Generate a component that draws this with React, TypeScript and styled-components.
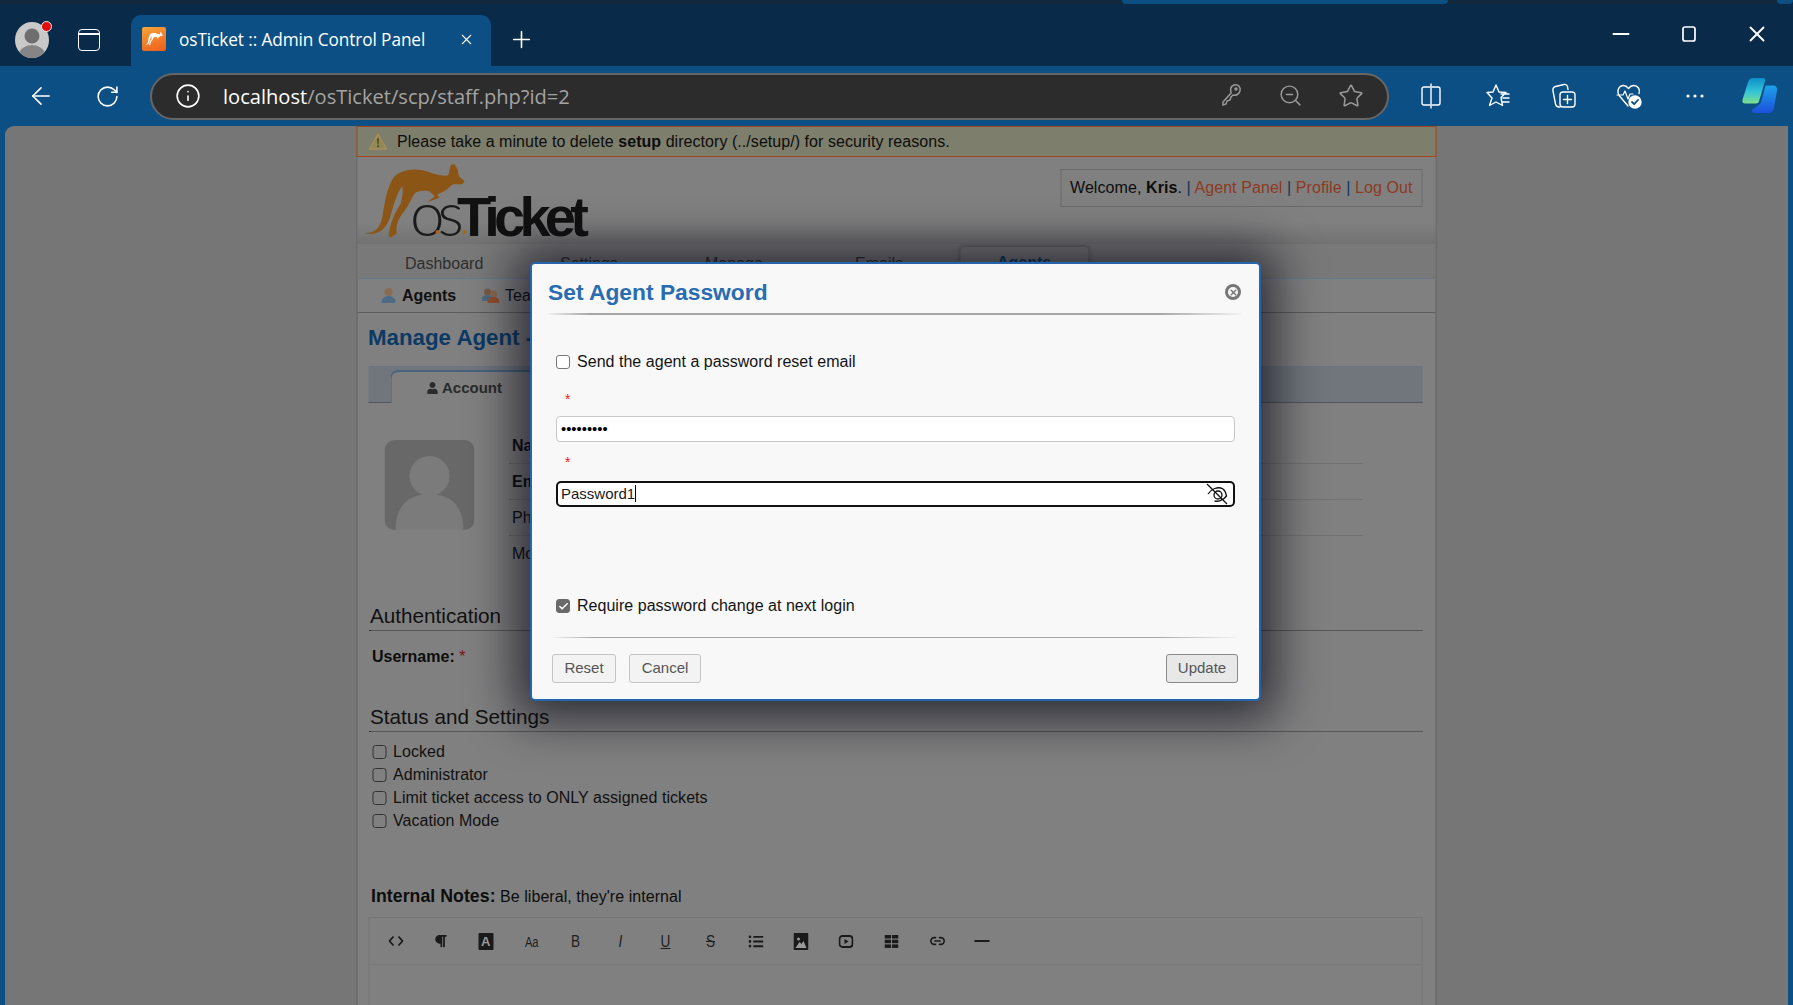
import * as React from 'react';
import styled, {createGlobalStyle} from 'styled-components';
import {ArrowLeft, Check, Info, Minus, Plus, RotateCw, Star, X, ZoomOut, Link2} from 'lucide-react';
import {FaListUl, FaParagraph, FaUser} from 'react-icons/fa';

const GlobalStyle = createGlobalStyle`
    html, body {
        margin: 0;
        padding: 0;
        height: 100%;
        overflow: hidden;
        background: #767676;
    }
    #root {
        height: 100%;
    }
    * {
        box-sizing: border-box;
    }
`;

const Browser = styled.div`
    display: flex;
    flex-direction: column;
    height: 1005px;
    font-family: 'Liberation Sans', Arial, sans-serif;
    color: #0d0d0d;
`;

const TabStrip = styled.div`
    height: 66px;
    background: #0a2a49;
    display: flex;
    flex-direction: column;
`;

const TopEdge = styled.div`
    height: 4px;
    background: #12283d;
    display: flex;
    justify-content: flex-end;
`;

const EdgeSegment = styled.div<{$w: number; $mr: number}>`
    width: ${(p) => p.$w}px;
    margin-right: ${(p) => p.$mr}px;
    background: #0c4f83;
    border-radius: 0 0 4px 4px;
`;

const TabRow = styled.div`
    flex: 1;
    display: flex;
    align-items: flex-end;
    padding-left: 15px;
`;

const Profile = styled.div`
    position: relative;
    width: 34px;
    height: 36px;
    margin-bottom: 8px;
    border-radius: 50%;
    background: #c9c9c9;
    overflow: hidden;
`;

const ProfileWrap = styled.div`
    position: relative;
    width: 34px;
    height: 44px;
`;

const RedDot = styled.span`
    position: absolute;
    right: -3px;
    top: -1px;
    width: 11px;
    height: 11px;
    border-radius: 50%;
    background: #e00b0b;
    border: 1px solid #f2f2f2;
`;

const SideIcon = styled.div`
    width: 22px;
    height: 22px;
    margin: 0 31px 15px 29px;
    border: 1.5px solid #fff;
    border-radius: 4px;
    background: linear-gradient(transparent 0 3.5px, #fff 3.5px 5px, transparent 5px);
`;

const ActiveTab = styled.div`
    width: 360px;
    height: 51px;
    background: #0c4f84;
    border-radius: 10px 10px 0 0;
    display: flex;
    align-items: center;
    padding: 0 16px 3px 11px;
    color: #fff;
    font-family: 'Open Sans', sans-serif;
    font-size: 17.25px;
`;

const Favicon = styled.div`
    width: 24px;
    height: 24px;
    border-radius: 2px;
    background: linear-gradient(160deg, #f4a53a, #ee5c1b);
    margin-right: 13px;
    display: flex;
    align-items: center;
    justify-content: center;
`;

const TabTitle = styled.span`
    flex: 1;
    white-space: nowrap;
    letter-spacing: -0.1px;
`;

const NewTab = styled.div`
    display: flex;
    color: #fff;
    margin: 0 0 13px 17px;
`;

const WindowButtons = styled.div`
    margin-left: auto;
    display: flex;
    gap: 42px;
    align-items: center;
    padding-right: 23px;
    height: 52px;
    margin-bottom: 6px;
    color: #fff;
`;

const Toolbar = styled.div`
    height: 60px;
    background: #0b4f84;
    display: flex;
    align-items: center;
    color: #fff;
    padding-left: 27px;
`;

const NavIcon = styled.div<{$mr: number}>`
    display: flex;
    margin-right: ${(p) => p.$mr}px;
`;

const AddressBar = styled.div`
    width: 1239px;
    height: 47px;
    border: 2px solid #666;
    border-radius: 24px;
    background: #2c2c2c;
    display: flex;
    align-items: center;
    padding: 0 23px 0 23px;
    font-family: 'Open Sans', sans-serif;
    font-size: 20.1px;
`;

const Host = styled.span`
    color: #fff;
    margin-left: 22px;
`;

const UrlPath = styled.span`
    color: #a3a3a3;
    flex: 1;
`;

const BarIcons = styled.div`
    display: flex;
    gap: 35px;
    color: #9a9a9a;
`;

const ToolIcons = styled.div`
    display: flex;
    align-items: center;
    margin-left: 29px;
    gap: 40px;
`;

const CopilotSlot = styled.div`
    display: flex;
    margin: -2px 0 0 -6px;
`;

const Viewport = styled.div`
    flex: 1;
    background: #0b4f84;
    padding: 0 5px;
    min-height: 0;
`;

const PageArea = styled.div`
    position: relative;
    height: 100%;
    background: #767676;
    border-top-left-radius: 9px;
    overflow: hidden;
`;

const Wrapper = styled.div`
    width: 1080px;
    margin: 0 auto;
    background: #808080;
    border-left: 1px solid #5f5f5f;
    border-right: 1px solid #5f5f5f;
    height: 100%;
    transform: translateX(-0.5px);
`;

const Notice = styled.div`
    height: 31px;
    margin: 0 -1px;
    background: #7d7e6b;
    border: 1px solid #a5471b;
    display: flex;
    align-items: center;
    padding-left: 11px;
    font-size: 16px;
    letter-spacing: 0.05px;
    gap: 10px;
`;

const Header = styled.div`
    position: relative;
    height: 87px;
    background: linear-gradient(#808080 75%, #727272);
`;

const LogoMark = styled.svg`
    position: absolute;
    left: 3px;
    top: 5px;
`;

const LogoWords = styled.div`
    position: absolute;
    left: 53px;
    top: 25px;
    display: flex;
    align-items: baseline;
    line-height: 60px;
    color: #111;
`;

const LogoThin = styled.span`
    font-family: Lato, sans-serif;
    font-weight: 300;
    font-size: 62px;
    letter-spacing: -7px;
    color: #1a1a1a;
`;

const LogoBold = styled.span`
    font-family: 'Liberation Sans', sans-serif;
    font-weight: 700;
    font-size: 56px;
    letter-spacing: -5.8px;
`;

const LogoDot = styled.span<{$x: number}>`
    position: absolute;
    left: ${(p) => p.$x}px;
    top: 73px;
    width: 4px;
    height: 4px;
    border-radius: 50%;
    background: #a8651c;
`;

const WelcomeBox = styled.div`
    position: absolute;
    right: 13px;
    top: 12px;
    height: 38px;
    width: 362px;
    padding-left: 9px;
    border: 1px solid #6b6b6b;
    display: flex;
    align-items: center;
    font-size: 16px;
    letter-spacing: 0.08px;
`;

const WelcomeText = styled.span`
    white-space: pre;
`;

const TopLink = styled.span`
    color: #8c3a22;
`;

const Separator = styled.span`
    color: #0d3558;
`;

const MainNav = styled.div`
    height: 35px;
    background: #797979;
    border-bottom: 1px solid #68788a;
    display: flex;
    padding-left: 48px;
    font-size: 16px;
    color: #2e2e2e;
`;

const MainNavItem = styled.div<{$w: number}>`
    width: ${(p) => p.$w}px;
    padding-top: 11px;
    white-space: nowrap;
`;

const ActiveNavItem = styled.div`
    width: 128px;
    height: 40px;
    margin: 3px 0 0 -37px;
    padding: 7px 0 0 37px;
    font-weight: 700;
    color: #0e3d66;
    background: #7a7a7a;
    border-radius: 4px 4px 0 0;
    box-shadow: 0 -1px 4px rgba(0, 0, 0, 0.3);
`;

const SubNav = styled.div`
    height: 34px;
    border-bottom: 1px solid #5c5c5c;
    display: flex;
    align-items: center;
    padding-left: 23px;
    font-size: 16px;
    color: #111;
`;

const SubNavItem = styled.div<{$bold?: boolean; $w: number}>`
    display: flex;
    align-items: center;
    gap: 6px;
    width: ${(p) => p.$w}px;
    font-weight: ${(p) => (p.$bold ? 700 : 400)};
`;

const Content = styled.div`
    padding: 0 13px 0 11px;
`;

const PageTitle = styled.h2`
    margin: 12px 0 0;
    font-size: 22.3px;
    line-height: 25px;
    font-weight: 700;
    color: #0c3a64;
    white-space: nowrap;
`;

const TabBar = styled.div`
    margin-top: 16px;
    height: 37px;
    background: #70767c;
    border-bottom: 1px solid #555;
    padding: 4px 0 0 22px;
`;

const AccountTab = styled.div`
    width: 300px;
    height: 33px;
    background: #808080;
    border-top: 2px solid #47627f;
    border-left: 1px solid #47627f;
    border-top-left-radius: 8px;
    display: flex;
    align-items: center;
    gap: 4px;
    padding-left: 35px;
    font-weight: 700;
    font-size: 15px;
    color: #2b2b2b;
`;

const ProfileSection = styled.div`
    margin-top: 25px;
    display: flex;
    padding-left: 16px;
    gap: 34px;
`;

const Avatar = styled.svg`
    display: block;
    margin-top: 12px;
    flex: none;
`;

const FieldList = styled.div`
    width: 854px;
`;

const FieldRow = styled.div<{$bold?: boolean; $last?: boolean}>`
    height: 36px;
    padding: 8px 0 0 4px;
    font-size: 16px;
    line-height: 19px;
    font-weight: ${(p) => (p.$bold ? 700 : 400)};
    border-bottom: ${(p) => (p.$last ? 'none' : '1px dotted #666')};
`;

const SectionHeading = styled.div<{$mt: number}>`
    margin-top: ${(p) => p.$mt}px;
    height: 27px;
    padding-left: 2px;
    font-size: 20.7px;
    line-height: 23px;
    color: #111;
    border-bottom: 1px dotted #2f2f2f;
`;

const UsernameRow = styled.div`
    margin: 14px 0 0 4px;
    height: 22px;
    line-height: 23px;
    font-size: 16px;
    font-weight: 700;
    white-space: pre;
`;

const Required = styled.span`
    color: #7c1414;
    font-weight: 400;
`;

const StatusList = styled.div`
    margin: 9px 0 0 4px;
`;

const StatusRow = styled.div`
    height: 22.8px;
    display: flex;
    align-items: center;
    gap: 7px;
    font-size: 16px;
    letter-spacing: 0.05px;
    color: #111;
`;

const Box = styled.span<{$checked?: boolean; $dim?: boolean}>`
    flex: none;
    width: 14px;
    height: 14px;
    border-radius: 3px;
    border: 1px solid ${(p) => (p.$dim ? '#333' : p.$checked ? '#6a6a6a' : '#777')};
    background: ${(p) => (p.$dim ? 'transparent' : p.$checked ? '#6a6a6a' : '#fff')};
    display: flex;
    align-items: center;
    justify-content: center;
    color: #fff;
`;

const NotesLine = styled.div`
    margin: 53px 0 0 3px;
    height: 22px;
    line-height: 22px;
    font-size: 16px;
    letter-spacing: 0.05px;
`;

const NotesLabel = styled.b`
    font-size: 17.7px;
`;

const Editor = styled.div`
    margin-top: 10px;
    height: 120px;
    border: 1px solid #757575;
`;

const EditorToolbar = styled.div`
    height: 47px;
    border-bottom: 1px solid #787878;
    display: flex;
    align-items: center;
    padding-left: 17px;
    color: #1a1a1a;
`;

const EditorButton = styled.div`
    width: 45.1px;
    flex: none;
    height: 22px;
    display: flex;
    align-items: center;
    justify-content: flex-start;
    padding-left: 2px;
`;

const EditorGlyph = styled.span<{$size?: number; $italic?: boolean; $under?: boolean; $strike?: boolean}>`
    display: block;
    width: 14px;
    padding-top: 2px;
    text-align: center;
    font-size: ${(p) => p.$size ?? 17}px;
    font-style: ${(p) => (p.$italic ? 'italic' : 'normal')};
    text-decoration: ${(p) => (p.$under ? 'underline' : p.$strike ? 'line-through' : 'none')};
    line-height: 16px;
    color: #1e1e1e;
    transform: scaleX(0.8);
`;

const InvertedA = styled.span`
    display: block;
    width: 15px;
    height: 17px;
    border-radius: 1px;
    background: #1a1a1a;
    color: #9a9a9a;
    text-align: center;
    font-size: 13px;
    font-weight: 700;
    line-height: 17px;
`;

const RuleGlyph = styled.span`
    display: block;
    width: 15px;
    height: 2px;
    background: #1a1a1a;
`;

const Modal = styled.div`
    position: absolute;
    left: 525px;
    top: 136px;
    width: 731px;
    height: 439px;
    background: #f8f8f8;
    border: 2px solid #2565ae;
    border-radius: 5px;
    box-shadow: 0 3px 48px 14px rgba(8, 8, 22, 0.72);
    display: flex;
    flex-direction: column;
    color: #141414;
`;

const ModalHeader = styled.div`
    height: 38px;
    margin: 9px 18px 2px 16px;
    display: flex;
    align-items: center;
    justify-content: space-between;
`;

const ModalTitle = styled.h3`
    margin: 0;
    font-size: 22.8px;
    font-weight: 700;
    color: #2a6cb0;
`;

const CloseDot = styled.div`
    width: 16px;
    height: 16px;
    border-radius: 50%;
    border: 3px solid #777;
    color: #777;
    display: flex;
    align-items: center;
    justify-content: center;
`;

const FadeRule = styled.div<{$h: number; $ml: number; $mr: number; $mt?: number}>`
    height: ${(p) => p.$h}px;
    margin: ${(p) => p.$mt ?? 0}px ${(p) => p.$mr}px 0 ${(p) => p.$ml}px;
    flex: none;
    background: linear-gradient(90deg, #f0f0f0, #a6a6a6 6%, #a6a6a6 88%, #f2f2f2);
`;

const ModalBody = styled.div`
    padding: 0 24px 0 24px;
`;

const CheckRow = styled.div<{$mt: number}>`
    margin-top: ${(p) => p.$mt}px;
    height: 20px;
    display: flex;
    align-items: center;
    gap: 7px;
    font-size: 16px;
    letter-spacing: 0.03px;
`;

const StarRow = styled.div<{$mt: number}>`
    margin-top: ${(p) => p.$mt}px;
    height: 16px;
    padding-left: 9px;
    color: #f01818;
    font-size: 14px;
    line-height: 18px;
`;

const PasswordInput = styled.input`
    display: block;
    width: 100%;
    height: 26px;
    margin-top: 10px;
    padding: 0 4px;
    border: 1px solid #c8c8c8;
    border-radius: 4px;
    background: #fff;
    color: #000;
    font-size: 14.8px;
    outline: none;
`;

const FocusedInput = styled.div`
    position: relative;
    height: 26px;
    margin-top: 12px;
    padding: 0 3px 2px;
    border: 2px solid #111;
    border-radius: 5px;
    background: #fff;
    display: flex;
    align-items: center;
    font-size: 15px;
    color: #1a1a1a;
`;

const Caret = styled.span`
    width: 1px;
    height: 17px;
    background: #000;
`;

const EyeButton = styled.svg`
    position: absolute;
    right: 4px;
    top: 0;
`;

const ModalFooter = styled.div`
    margin-top: 16px;
    padding: 0 21px 0 20px;
    display: flex;
    gap: 13px;
`;

const Button = styled.div<{$w: number; $primary?: boolean}>`
    width: ${(p) => p.$w}px;
    height: 29px;
    margin-left: ${(p) => (p.$primary ? 'auto' : '0')};
    padding-bottom: 2px;
    border: 1px solid ${(p) => (p.$primary ? '#8a8a8a' : '#c4c4c4')};
    border-radius: 3px;
    background: ${(p) => (p.$primary ? '#e8e8e8' : '#f3f3f3')};
    color: #555;
    font-size: 15px;
    display: flex;
    align-items: center;
    justify-content: center;
`;

function KangarooPath({color}: {color: string}) {
    return (
        <path
            fill={color}
            d="M12 213C40 215 58 200 65 165C72 125 78 75 100 45C120 23 165 15 205 30C225 38 245 43 263 40L270 10L280 5L290 20L295 43L312 58L305 67L278 67C265 75 255 90 230 97L236 107L200 121L222 103L205 87C190 85 175 87 165 91C150 110 150 125 125 155C110 175 105 195 108 215L88 227L84 220C88 185 100 155 120 125C125 105 128 90 125 73C110 90 100 125 90 160C80 200 50 225 12 213Z"
        />
    );
}

function KeyIcon() {
    return (
        <svg width="22" height="24" viewBox="0 0 22 24" fill="none" stroke="currentColor" strokeWidth="1.5">
            <path d="M13 2c4-1 7 2 6 6-1 3-4 5-7 4l-2 2-1 3-3 1-1 3-3 1v-3l8-9c-1-4 0-7 3-8z" />
            <circle cx="15" cy="6" r="1" />
        </svg>
    );
}

function ToolIcon({kind}: {kind: string}) {
    const common = {fill: 'none', stroke: '#fff', strokeWidth: 1.4, strokeLinejoin: 'round' as const, strokeLinecap: 'round' as const};
    return (
        <svg width="26" height="26" viewBox="0 0 26 26" {...common}>
            {kind === 'split' && (
                <>
                    <path d="M12 4H6a2 2 0 0 0-2 2v14a2 2 0 0 0 2 2h6M14 4h6a2 2 0 0 1 2 2v14a2 2 0 0 1-2 2h-6" />
                    <path d="M13 1v24" />
                </>
            )}
            {kind === 'fav' && (
                <path d="M12 2l3 7 7 .5-5 5 1.500 8L12 19l-6.500 3.500L8 15 3 9.500l6-.5zM17 11h8M19 15h6M18 19h7" />
            )}
            {kind === 'collect' && (
                <>
                    <path d="M10 24H9c-2 0-3-1-3.500-3L3 8c-.5-2 .5-4 2.500-4.500L14 1.500c2-.5 3 .5 3.500 2l.5 3" />
                    <rect x="10" y="9" width="15" height="15" rx="3" />
                    <path d="M17.500 12.500v8M13.500 16.500h8" />
                </>
            )}
            {kind === 'health' && (
                <>
                    <path d="M12 23L3.500 13C0 8 3 2.500 7.500 2.500c2 0 3.500 1 5 3 1.500-2 3-3 5-3 4.500 0 7 4 5.500 8" />
                    <path d="M1 12h6l2-4 3 8 2-5h3" strokeWidth="1.200" />
                    <circle cx="19" cy="19" r="6" fill="#fff" stroke="#fff" />
                    <path d="M16 19l2.200 2.200L22 17" stroke="#0b4f84" strokeWidth="1.800" />
                </>
            )}
        </svg>
    );
}

function CopilotIcon() {
    return (
        <svg width="36" height="38" viewBox="0 0 36 36" preserveAspectRatio="none">
            <defs>
                <linearGradient id="cpA" x1="0" y1="0" x2="0" y2="1">
                    <stop offset="0" stopColor="#0e8fc8" />
                    <stop offset="0.55" stopColor="#34c6d8" />
                    <stop offset="1" stopColor="#7fe08a" />
                </linearGradient>
                <linearGradient id="cpB" x1="0" y1="0" x2="0" y2="1">
                    <stop offset="0" stopColor="#1ea2e8" />
                    <stop offset="1" stopColor="#1b50dc" />
                </linearGradient>
            </defs>
            <path d="M11 2h10c2 0 2.500 1.500 2 3l-6 19c-.5 1.500-1.500 2-3 2H3c-2 0-3-1.500-2.500-3.500L6 6c1-3 3-4 5-4z" fill="url(#cpA)" />
            <path d="M24 9h7c3 0 4.500 2 4 5l-3 16c-.5 3-2.500 5-6 5H12c-2 0-2.500-2-1.500-3.500l5-3c3-2 3.500-4 4.500-7L23 11c.3-1 .5-2 1-2z" fill="url(#cpB)" />
        </svg>
    );
}

function StatusCheck({label}: {label: string}) {
    return (
        <StatusRow>
            <Box $dim />
            {label}
        </StatusRow>
    );
}

const STATUS_LABELS = ['Locked', 'Administrator', 'Limit ticket access to ONLY assigned tickets', 'Vacation Mode'];

export default function App() {
    return (
        <Browser>
            <GlobalStyle />
            <TabStrip>
                <TopEdge>
                    <EdgeSegment $w={326} $mr={329} />
                    <EdgeSegment $w={16} $mr={0} />
                </TopEdge>
                <TabRow>
                    <ProfileWrap>
                        <Profile>
                            <svg width="34" height="36" viewBox="0 0 34 36">
                                <circle cx="17" cy="14" r="7.500" fill="#6e6e6e" />
                                <ellipse cx="17" cy="33" rx="13" ry="10" fill="#858585" />
                            </svg>
                        </Profile>
                        <RedDot />
                    </ProfileWrap>
                    <SideIcon />
                    <ActiveTab>
                        <Favicon>
                            <svg width="20" height="20" viewBox="0 0 330 240">
                                <KangarooPath color="#fff" />
                            </svg>
                        </Favicon>
                        <TabTitle>osTicket :: Admin Control Panel</TabTitle>
                        <X size={17} strokeWidth={1.6} />
                    </ActiveTab>
                    <NewTab>
                        <Plus size={27} strokeWidth={1.4} />
                    </NewTab>
                    <WindowButtons>
                        <Minus size={26} strokeWidth={1.7} />
                        <svg width="26" height="26" viewBox="0 0 26 26" fill="none" stroke="#fff" strokeWidth="1.700">
                            <rect x="7" y="6" width="12" height="14" rx="2" />
                        </svg>
                        <X size={26} strokeWidth={1.7} />
                    </WindowButtons>
                </TabRow>
            </TabStrip>
            <Toolbar>
                <NavIcon $mr={40}>
                    <ArrowLeft size={28} strokeWidth={1.4} />
                </NavIcon>
                <NavIcon $mr={30}>
                    <RotateCw size={25} strokeWidth={1.5} />
                </NavIcon>
                <AddressBar>
                    <Info size={26} strokeWidth={1.5} color="#fff" />
                    <Host>localhost</Host>
                    <UrlPath>/osTicket/scp/staff.php?id=2</UrlPath>
                    <BarIcons>
                        <KeyIcon />
                        <ZoomOut size={25} strokeWidth={1.4} />
                        <Star size={26} strokeWidth={1.4} />
                    </BarIcons>
                </AddressBar>
                <ToolIcons>
                    <ToolIcon kind="split" />
                    <ToolIcon kind="fav" />
                    <ToolIcon kind="collect" />
                    <ToolIcon kind="health" />
                    <svg width="26" height="26" viewBox="0 0 26 26" fill="#fff">
                        <circle cx="6" cy="13" r="1.600" />
                        <circle cx="13" cy="13" r="1.600" />
                        <circle cx="20" cy="13" r="1.600" />
                    </svg>
                    <CopilotSlot>
                        <CopilotIcon />
                    </CopilotSlot>
                </ToolIcons>
            </Toolbar>
            <Viewport>
                <PageArea>
                    <Wrapper>
                        <Notice>
                            <svg width="19" height="17" viewBox="0 0 19 17">
                                <path d="M9.500 1L18 16H1z" fill="#8d8a58" stroke="#a98c5c" strokeWidth="1.400" strokeLinejoin="round" />
                                <path d="M8.700 5.500h1.600l-.3 6H9zM8.700 12.500h1.600v1.700H8.700z" fill="#4a3c10" />
                            </svg>
                            <span>
                                Please take a minute to delete <b>setup</b> directory (../setup/) for security reasons.
                            </span>
                        </Notice>
                        <Header>
                            <LogoMark width="107" height="77" viewBox="0 0 320 231">
                                <KangarooPath color="#8b5516" />
                            </LogoMark>
                            <LogoWords>
                                <LogoThin>os</LogoThin>
                                <LogoBold>Ticket</LogoBold>
                            </LogoWords>
                            <LogoDot $x={78} />
                            <LogoDot $x={105} />
                            <WelcomeBox>
                                <WelcomeText>
                                    Welcome, <b>Kris</b>. <Separator>|</Separator> <TopLink>Agent Panel</TopLink>{' '}
                                    <Separator>|</Separator> <TopLink>Profile</TopLink> <Separator>|</Separator>{' '}
                                    <TopLink>Log Out</TopLink>
                                </WelcomeText>
                            </WelcomeBox>
                        </Header>
                        <MainNav>
                            <MainNavItem $w={155}>Dashboard</MainNavItem>
                            <MainNavItem $w={145}>Settings</MainNavItem>
                            <MainNavItem $w={150}>Manage</MainNavItem>
                            <MainNavItem $w={142}>Emails</MainNavItem>
                            <ActiveNavItem>Agents</ActiveNavItem>
                        </MainNav>
                        <SubNav>
                            <SubNavItem $bold $w={101}>
                                <svg width="16" height="17" viewBox="0 0 16 17">
                                    <circle cx="8" cy="5" r="4" fill="#8a6a50" />
                                    <path d="M1 16c0-5 3-7 7-7s7 2 7 7z" fill="#4e6a83" />
                                </svg>
                                Agents
                            </SubNavItem>
                            <SubNavItem $w={100}>
                                <svg width="18" height="17" viewBox="0 0 18 17">
                                    <circle cx="6" cy="5" r="3.500" fill="#7a5c44" />
                                    <path d="M0 14c0-4 2-6 6-6s5 2 5 6z" fill="#4e6a83" />
                                    <circle cx="12" cy="7" r="3.500" fill="#8a6a50" />
                                    <path d="M6 16c0-4 2-6 6-6s6 2 6 6z" fill="#94502c" />
                                </svg>
                                Teams
                            </SubNavItem>
                        </SubNav>
                        <Content>
                            <PageTitle>Manage Agent - Kris Admin</PageTitle>
                            <TabBar>
                                <AccountTab>
                                    <FaUser size={12} />
                                    Account
                                </AccountTab>
                            </TabBar>
                            <ProfileSection>
                                <Avatar width="90" height="90" viewBox="0 0 90 90">
                                    <rect width="90" height="90" rx="10" fill="#686868" />
                                    <circle cx="45" cy="36" r="20" fill="#7b7b7b" />
                                    <path d="M11 90C11 65 25 54 45 54s34 11 34 36z" fill="#7b7b7b" />
                                </Avatar>
                                <FieldList>
                                    <FieldRow $bold>Name:</FieldRow>
                                    <FieldRow $bold>Email:</FieldRow>
                                    <FieldRow>Phone:</FieldRow>
                                    <FieldRow $last>Mobile:</FieldRow>
                                </FieldList>
                            </ProfileSection>
                            <SectionHeading $mt={32}>Authentication</SectionHeading>
                            <UsernameRow>
                                Username: <Required>*</Required>
                            </UsernameRow>
                            <SectionHeading $mt={38}>Status and Settings</SectionHeading>
                            <StatusList>
                                {STATUS_LABELS.map((label) => (
                                    <StatusCheck key={label} label={label} />
                                ))}
                            </StatusList>
                            <NotesLine>
                                <NotesLabel>Internal Notes:</NotesLabel> Be liberal, they're internal
                            </NotesLine>
                            <Editor>
                                <EditorToolbar>
                                    <EditorButton>
                                        <svg width="15" height="12" viewBox="0 0 15 12" fill="none" stroke="#1a1a1a" strokeWidth="1.800">
                                            <path d="M5 1.500L1 6l4 4.500M10 1.500L14 6l-4 4.500" />
                                        </svg>
                                    </EditorButton>
                                    <EditorButton>
                                        <FaParagraph size={14} />
                                    </EditorButton>
                                    <EditorButton>
                                        <InvertedA>A</InvertedA>
                                    </EditorButton>
                                    <EditorButton>
                                        <EditorGlyph $size={14}>Aa</EditorGlyph>
                                    </EditorButton>
                                    <EditorButton>
                                        <EditorGlyph>B</EditorGlyph>
                                    </EditorButton>
                                    <EditorButton>
                                        <EditorGlyph $italic>I</EditorGlyph>
                                    </EditorButton>
                                    <EditorButton>
                                        <EditorGlyph $under>U</EditorGlyph>
                                    </EditorButton>
                                    <EditorButton>
                                        <EditorGlyph $strike>S</EditorGlyph>
                                    </EditorButton>
                                    <EditorButton>
                                        <FaListUl size={15} />
                                    </EditorButton>
                                    <EditorButton>
                                        <svg width="15" height="17" viewBox="0 0 15 17">
                                            <rect width="15" height="17" rx="1" fill="#1a1a1a" />
                                            <circle cx="5" cy="6" r="1.500" fill="#9a9a9a" />
                                            <path d="M2 15l4-6 2 2 2-3 3 7z" fill="#9a9a9a" />
                                        </svg>
                                    </EditorButton>
                                    <EditorButton>
                                        <svg width="15" height="15" viewBox="0 0 15 15" fill="none">
                                            <rect x="1" y="2" width="13" height="11" rx="3" stroke="#1a1a1a" strokeWidth="1.800" />
                                            <path d="M6 5l4 2.500L6 10z" fill="#1a1a1a" />
                                        </svg>
                                    </EditorButton>
                                    <EditorButton>
                                        <svg width="14" height="13" viewBox="0 0 14 13" fill="#1a1a1a">
                                            <rect x="0" y="0" width="6.500" height="3.500" />
                                            <rect x="7.500" y="0" width="6.500" height="3.500" />
                                            <rect x="0" y="4.700" width="6.500" height="3.500" />
                                            <rect x="7.500" y="4.700" width="6.500" height="3.500" />
                                            <rect x="0" y="9.400" width="6.500" height="3.500" />
                                            <rect x="7.500" y="9.400" width="6.500" height="3.500" />
                                        </svg>
                                    </EditorButton>
                                    <EditorButton>
                                        <Link2 size={16} strokeWidth={2.4} />
                                    </EditorButton>
                                    <EditorButton>
                                        <RuleGlyph />
                                    </EditorButton>
                                </EditorToolbar>
                            </Editor>
                        </Content>
                    </Wrapper>
                    <Modal>
                        <ModalHeader>
                            <ModalTitle>Set Agent Password</ModalTitle>
                            <CloseDot>
                                <X size={9} strokeWidth={4} />
                            </CloseDot>
                        </ModalHeader>
                        <FadeRule $h={2} $ml={16} $mr={18} />
                        <ModalBody>
                            <CheckRow $mt={37}>
                                <Box />
                                Send the agent a password reset email
                            </CheckRow>
                            <StarRow $mt={18}>*</StarRow>
                            <PasswordInput type="password" readOnly value="Password1" />
                            <StarRow $mt={11}>*</StarRow>
                            <FocusedInput>
                                Password1
                                <Caret />
                                <EyeButton width="24" height="22" viewBox="0 0 24 22" fill="none" stroke="#111" strokeWidth="1.300">
                                    <path d="M2 1l20 20" />
                                    <path d="M3 11c3-5 10-8 15-5 2 1.500 3 4 3.500 7-3 4-8 6-12 5" />
                                    <circle cx="13" cy="12" r="4" />
                                </EyeButton>
                            </FocusedInput>
                            <CheckRow $mt={89}>
                                <Box $checked>
                                    <Check size={11} strokeWidth={3.5} />
                                </Box>
                                Require password change at next login
                            </CheckRow>
                        </ModalBody>
                        <FadeRule $h={1} $ml={21} $mr={22} $mt={21} />
                        <ModalFooter>
                            <Button $w={64}>Reset</Button>
                            <Button $w={72}>Cancel</Button>
                            <Button $w={72} $primary>
                                Update
                            </Button>
                        </ModalFooter>
                    </Modal>
                </PageArea>
            </Viewport>
        </Browser>
    );
}
